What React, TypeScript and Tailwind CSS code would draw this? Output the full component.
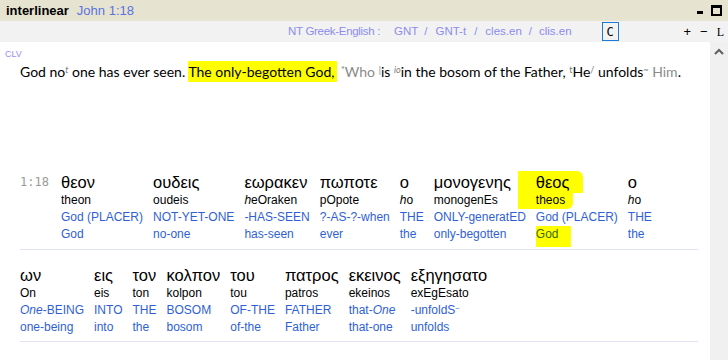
import React from "react";

type Word = {
  gr: string;
  tr: React.ReactNode;
  up: React.ReactNode;
  lo: string;
  hl?: boolean;
};

const row1: Word[] = [
  { gr: "θεον", tr: "theon", up: "God (PLACER)", lo: "God" },
  { gr: "ουδεις", tr: "oudeis", up: "NOT-YET-ONE", lo: "no-one" },
  { gr: "εωρακεν", tr: <><i>h</i>eOraken</>, up: "-HAS-SEEN", lo: "has-seen" },
  { gr: "πωποτε", tr: "pOpote", up: "?-AS-?-when", lo: "ever" },
  { gr: "ο", tr: <><i>h</i>o</>, up: "THE", lo: "the" },
  { gr: "μονογενης", tr: "monogenEs", up: "ONLY-generatED", lo: "only-begotten" },
  { gr: "θεος", tr: "theos", up: "God (PLACER)", lo: "God", hl: true },
  { gr: "ο", tr: <><i>h</i>o</>, up: "THE", lo: "the" },
];

const row2: Word[] = [
  { gr: "ων", tr: "On", up: <><i>One</i>-BEING</>, lo: "one-being" },
  { gr: "εις", tr: "eis", up: "INTO", lo: "into" },
  { gr: "τον", tr: "ton", up: "THE", lo: "the" },
  { gr: "κολπον", tr: "kolpon", up: "BOSOM", lo: "bosom" },
  { gr: "του", tr: "tou", up: "OF-THE", lo: "of-the" },
  { gr: "πατρος", tr: "patros", up: "FATHER", lo: "Father" },
  { gr: "εκεινος", tr: "ekeinos", up: <>that-<i>One</i></>, lo: "that-one" },
  { gr: "εξηγησατο", tr: "exEgEsato", up: <>-unfoldS<sup className="text-[7px]">~</sup></>, lo: "unfolds" },
];

function Column({ w }: { w: Word }) {
  return (
    <div className="flex flex-col">
      <div className="text-[16.5px] leading-[20px] text-black">
        {w.hl ? (
          <span className="-ml-[18px] pl-[18px] pr-[14px] pt-[2px] pb-[2px] bg-[#ffff00] rounded-tr-[6px]">{w.gr}</span>
        ) : (
          w.gr
        )}
      </div>
      <div className="text-[12px] leading-[17px] text-black">
        {w.hl ? (
          <span className="-ml-[18px] pl-[18px] pr-[8px] pb-[2px] bg-[#ffff00] rounded-br-[6px]">{w.tr}</span>
        ) : (
          w.tr
        )}
      </div>
      <div className="text-[12px] leading-[17px] text-[#2f5fd6] whitespace-nowrap">{w.up}</div>
      <div className="text-[12px] leading-[17px] text-[#2f5fd6]">
        {w.hl ? (
          <span className="pr-[12px] pb-[6px] pt-[1px] bg-[#ffff00] text-[#3a6a00]">{w.lo}</span>
        ) : (
          w.lo
        )}
      </div>
    </div>
  );
}

function Sup({ children, italic }: { children: React.ReactNode; italic?: boolean }) {
  return (
    <sup className={`text-[9px] text-[#7a7a7a] ${italic ? "italic" : ""}`}>{children}</sup>
  );
}

export default function App() {
  return (
    <div className="w-[728px] h-[360px] overflow-hidden bg-white flex flex-col font-['Liberation_Sans',Arial,sans-serif]">
      {/* title bar */}
      <div className="h-[21px] shrink-0 bg-[#e6e4d0] flex items-center pl-[6px] pr-[4px]">
        <span className="font-bold text-[13px] text-black">interlinear</span>
        <span className="ml-[8px] text-[13px] text-[#5a72e0]">John 1:18</span>
        <div className="ml-auto flex items-center gap-[8px] pr-[2px]">
          <div className="w-[6px] h-[3px] bg-black mt-[4px]" />
          <div className="w-[11px] h-[11px] border-[2px] border-black border-t-[3px]" />
        </div>
      </div>

      {/* source bar */}
      <div className="h-[21px] shrink-0 bg-[#f2f2f2] flex items-center whitespace-nowrap text-[11.5px] text-[#8c8cee]">
        <span className="ml-[288px] w-[106px] shrink-0 tracking-[-0.3px]">NT Greek-English :</span>
        <span>GNT</span>
        <span className="ml-[6px]">/</span>
        <span className="ml-[8px]">GNT-t</span>
        <span className="ml-[8px]">/</span>
        <span className="ml-[8px]">cles.en</span>
        <span className="ml-[7px]">/</span>
        <span className="ml-[7px]">clis.en</span>
        <div className="ml-[30px] shrink-0 w-[17px] h-[19px] border border-[#1a7ad4] flex items-center justify-center text-[12px] text-black font-['DejaVu_Sans_Mono',monospace]">
          C
        </div>
        <div className="ml-auto flex items-center gap-[9px] pr-[4px] text-black">
          <span className="text-[13px]">+</span>
          <span className="text-[13px]">−</span>
          <span className="text-[12px] font-['Liberation_Serif',serif]">L</span>
        </div>
      </div>

      <div className="flex-1 flex min-h-0">
        <div className="flex-1 min-w-0">
          <div className="pl-[5px] pt-[7px] text-[9px] leading-[10px] text-[#9c8cf0]">CLV</div>
          <div className="pl-[20px] pt-[3px] text-[14px] leading-[20px] text-black whitespace-nowrap font-['Lato',sans-serif]">
            God no<Sup italic>t</Sup> one has ever seen.{" "}
            <span className="bg-[#ffff00] py-[2px] pr-[3px]">The only-begotten God,</span>{" "}
            <Sup>*</Sup>
            <span className="text-[#8a8a8a]">Who</span> <Sup>|</Sup>is <Sup italic>io</Sup>in the bosom of the Father,{" "}
            <Sup>t</Sup>He<Sup>/</Sup> unfolds<Sup>~</Sup> <span className="text-[#8a8a8a]">Him</span>.
          </div>

          <div className="mt-[90px] mr-[12px] ml-[20px]">
            <div className="flex gap-x-[10px] pb-[6px] border-b border-[#dfe4f0]">
              <div className="w-[31px] text-[12px] leading-[20px] text-[#9a9a9a] font-['DejaVu_Sans_Mono',monospace]">1:18</div>
              {row1.map((w, i) => (
                <Column key={i} w={w} />
              ))}
            </div>
            <div className="flex gap-x-[10px] pt-[15px] pb-[5px] border-b border-[#dfe4f0]">
              {row2.map((w, i) => (
                <Column key={i} w={w} />
              ))}
            </div>
          </div>
        </div>

        {/* scrollbar */}
        <div className="w-[18px] bg-[#f0f0f0] flex justify-center pt-[6px]">
          <svg width="10" height="8" viewBox="0 0 10 8">
            <path d="M1 6 L5 2 L9 6" stroke="#606060" strokeWidth="2" fill="none" />
          </svg>
        </div>
      </div>
    </div>
  );
}
